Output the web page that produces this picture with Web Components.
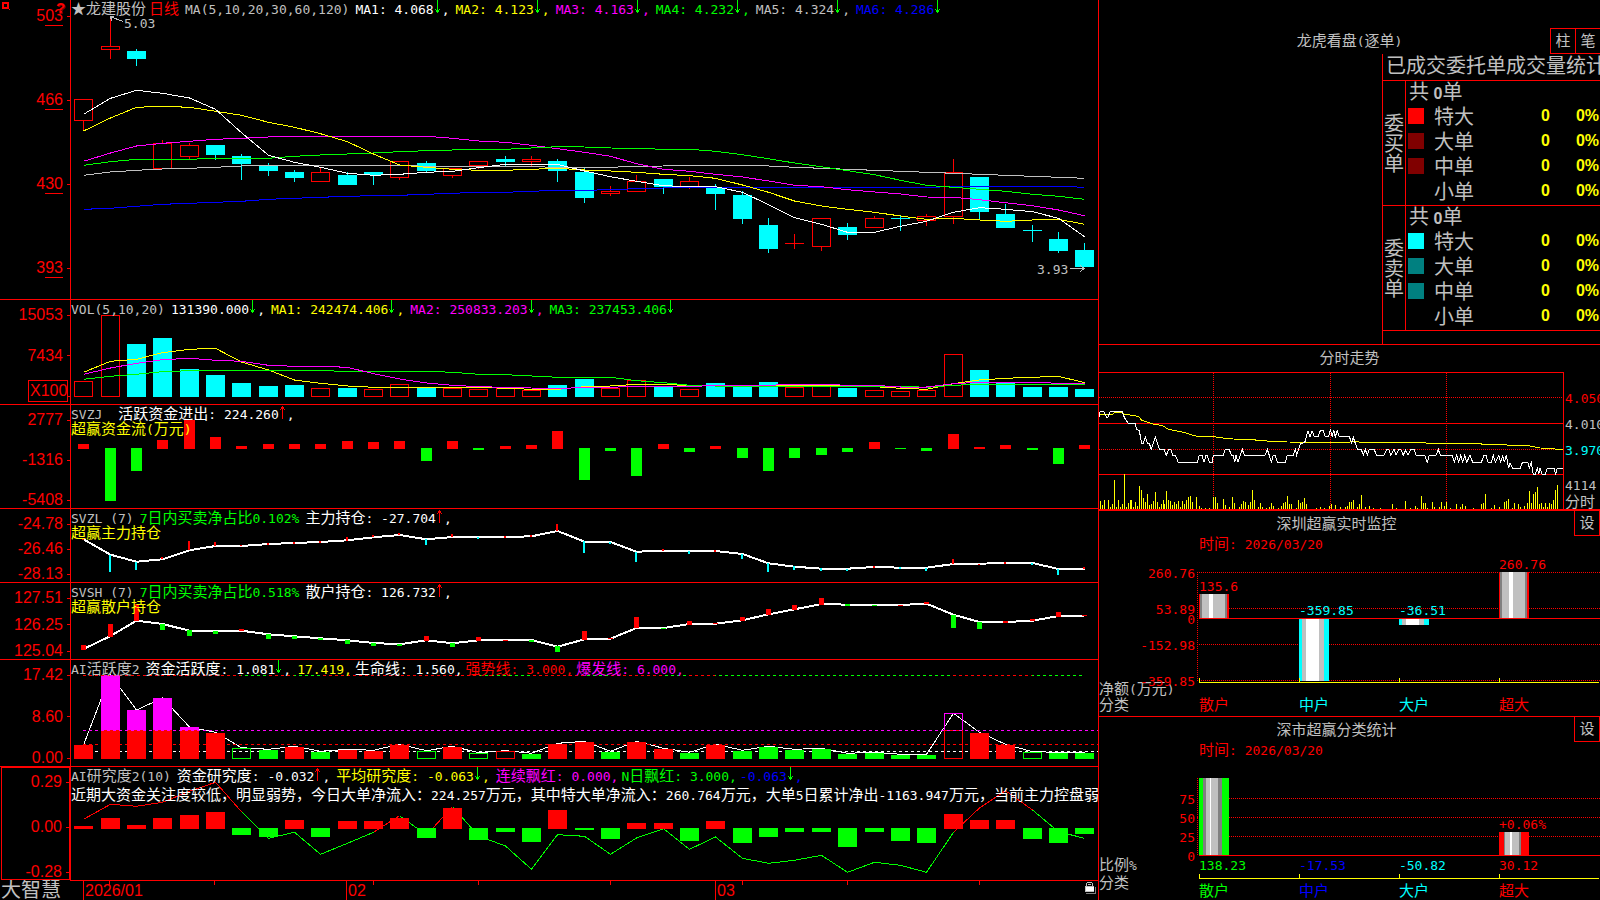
<!DOCTYPE html>
<html lang="zh-CN">
<head>
<meta charset="utf-8">
<title>大智慧 - 龙建股份 日线</title>
<style>
html,body{margin:0;height:100%;background:#000}
</style>
</head>
<body>
<quote-terminal></quote-terminal>
<script>
const RED='#f00',CY='#0ff',GR='#0f0',MG='#f0f',YE='#ff0',WH='#fff',GY='#c0c0c0',BL='#00f';
const COL={R:RED,C:CY,G:GR,M:MG};
const BASE=`
  *{box-sizing:border-box}
  :host{display:block;min-width:0;min-height:0}
  .a{font-family:"DejaVu Sans Mono","Liberation Mono",monospace;font-size:13px;line-height:0}
  button{font:inherit;color:inherit;background:#000;border:1px solid #f00;padding:0;margin:0;cursor:pointer}
  svg{display:block}
`;
/* Latin runs use the half-width face, Han text the full-width one. */
const mix=s=>s.replace(/[\x20-\x7e]+/g,m=>`<span class="a">${m}</span>`);
const arrow=d=>{
  const c=d==='u'?RED:GR;
  const p=d==='u'?'M3 1h1v13h-1zM2 2h3v2h-3zM1 4h1v1h-1zM5 4h1v1h-1z':'M3 0h1v13h-1zM2 10h3v2h-3zM1 9h1v1h-1zM5 9h1v1h-1z';
  return `<svg class="arw" width="8" height="14" viewBox="0 0 8 14" shape-rendering="crispEdges" aria-hidden="true"><path fill="${c}" d="${p}"/></svg>`;
};
/* One legend entry: [colour, text, arrow direction or '', trailing text] */
const item=([c,t,d='',e=''])=>`<span class="it${!d&&t.endsWith(',')?' tight':''}" style="color:${c}">${mix(t)}${d?arrow(d):''}${mix(e)}</span>`;

const define=(name,html,extra)=>customElements.define(name,class extends HTMLElement{
  constructor(){super();this.attachShadow({mode:'open'});}
  connectedCallback(){this.shadowRoot.innerHTML=typeof html==='function'?html(this):html;if(extra)extra(this);}
});

/* ---------- drawing helpers: 39 sessions share one x scale ---------- */
const W=1027,cx=i=>Math.round(12.3+26.34*i);
const rect=(x,y,w,h,c)=>`<rect x="${x}" y="${y}" width="${w}" height="${Math.max(1,h)}" fill="${c}"/>`;
const box=(x,y,w,h,c)=>`<path fill="none" stroke="${c}" d="M${x+.5} ${y+.5}h${w-1}v${h-1}h${1-w}z"/>`;
const poly=(pts,c,w=1)=>`<polyline fill="none" stroke="${c}" stroke-width="${w}" points="${pts.map(p=>p[0]+','+(+p[1]).toFixed(1)).join(' ')}"/>`;
const svg=(w,h,b)=>`<svg width="100%" height="100%" viewBox="0 0 ${w} ${h}" preserveAspectRatio="none" shape-rendering="crispEdges" aria-hidden="true">${b}</svg>`;
const serie=(ys,f,c,w)=>poly(ys.map((y,i)=>[cx(i)+.5,f(y)]),c,w);
const nums=s=>s.trim().split(/[\s,]+/).map(Number);
const bars=s=>s.trim().split(/\s+/).map(t=>[t[0],...t.slice(1).split('-').map(Number)]);

/* daily candles */
function kline(){
  const f=y=>y/3;
  const d=`R298-361-298-393 R139-149-50-177 C153-177-147-198 R430-506-420-506 R436-469-429-478 C435-465-435-480 C468-492-462-540 C497-513-489-528 C516-534-510-546 R517-545-504-545 C525-555-516-555 C516-526-516-555 R485-532-485-540 C489-513-483-517 R506-527-506-534 R485-497-485-507 C477-486-468-497 R478-485-468-497 C483-513-477-546 C516-594-504-609 R574-580-558-588 R544-575-525-575 C537-561-537-582 R544-560-531-567 C564-582-552-630 C585-657-573-672 C675-747-654-759 R730-730-702-747 R655-739-655-753 C681-705-669-720 R655-683-648-683 C654-657-648-693 R649-661-642-678 R517-650-477-672 C531-636-531-657 C642-684-612-684 C690-692-675-726 C717-753-696-759 C750-801-729-801`;
  let o='';
  bars(d).forEach(([k,t,b,h,l],i)=>{
    const x=cx(i),c=COL[k],r=Math.round,fl=Math.floor;
    if(k==='C')o+=rect(x,r(f(h)),1,r(f(l))-r(f(h)),c)+rect(x-9,r(f(t)),19,r(f(b))-r(f(t)),c);
    else if(t===b)o+=rect(x,r(f(h)),1,r(f(l))-r(f(h)),c)+rect(x-9,fl(f(t)),19,1,c);
    else{if(h<t)o+=rect(x,r(f(h)),1,r(f(t))-r(f(h)),c);
      if(l>b)o+=rect(x,fl(f(b)),1,r(f(l))-fl(f(b)),c);
      o+=box(x-9,fl(f(t)),19,fl(f(b))-fl(f(t))+1,c);}
  });
  o+=serie(nums('628 625 619 613 610 607 604 598 595 592 589 587 586 583 580 577 577 574 571 571 569 566 564 562 562 562 562 562 562 562 562 562 562 560 559 559 559 559 562'),f,BL);
  o+=serie(nums('526 516 511 507 505 502 498 496 496 496 496 496 496 499 499 499 499 500 502 502 502 499 498 496 496 496 498 502 505 508 511 514 517 520 523 526 529 532 535'),f,GY);
  o+=serie(nums('484 459 438 430 424 418 415 411 409 409 409 409 409 409 415 423 427 436 446 457 469 491 508 514 523 531 543 556 560 569 576 582 591 592 599 608 617 630 647'),f,MG);
  o+=serie(nums('496 485 478 478 478 475 475 475 469 465 462 459 455 452 450 448 448 444 440 441 444 445 448 448 454 464 476 489 500 512 524 541 556 562 568 574 583 589 598'),f,GR);
  o+=serie(nums('393 354 322 319 322 334 346 367 382 401 425 462 495 502 508 511 511 508 505 510 513 517 523 527 535 555 577 603 618 628 637 648 658 655 660 664 660 658 673'),f,YE);
  o+=serie(nums('343 295 271 280 294 328 398 466 487 502 520 526 523 517 514 503 493 493 493 513 530 544 557 560 560 577 614 653 673 697 697 679 664 637 623 628 635 655 710'),f,WH);
  o+=`<path fill="none" stroke="${GY}" d="M39 16.5L52 21.5M39 16.5h4M39 16.5l2 4M999 268.5h14M1009 265l4 3.5l-4 3.5"/>`;
  return svg(W,299,o);
}
function volume(){
  const f=y=>y/3-5;let o='';
  bars('R259 R61 C147 C129 C222 C240 C264 C273 C270 R280 C279 R283 R268 C279 R280 R283 R280 R286 C270 C252 R280 R256 C276 R283 C264 C276 C261 R277 R270 C279 R286 R289 R286 R178 C225 C264 C276 C276 C282').forEach(([k,t],i)=>{
    const y=k==='R'?Math.floor(f(t)):Math.round(f(t));
    o+=(k==='R'?box:rect)(cx(i)-9,y,19,97-y,COL[k]);
  });
  o+=serie(nums('232 199 193 173 163 160 201 225 255 265 273 277 277 277 277 277 280 283 283 275 273 268 268 272 271 271 271 271 271 273 275 280 283 266 255 250 247 244 263'),f,YE);
  o+=serie(nums('253 244 238 230 227 227 227 227 227 227 229 229 229 229 232 238 239 243 247 247 247 257 263 271 273 273 273 274 274 274 274 274 277 271 268 268 268 268 268'),f,GR);
  o+=serie(nums('238 219 205 194 190 196 199 211 214 214 217 236 252 264 271 275 277 279 281 277 277 274 274 274 272 271 271 268 268 271 271 276 276 266 262 262 262 265 265'),f,MG);
  return svg(W,104,o);
}
function fund(){
  const f=y=>Math.round(y/3-110);let o='';
  bars('R447 G618 G528 R435 R375 R426 R453 R447 R447 R447 R438 R441 R438 G498 R438 G465 R453 R450 R408 G555 G468 G543 R447 G471 R453 G489 G528 G489 G480 G471 R441 G462 G468 R417 R456 R450 G465 G507 R450').forEach(([k,t],i)=>{
    o+=k==='R'?rect(cx(i)-5,f(t),11,44-f(t),RED):rect(cx(i)-5,43,11,f(t)-43,GR);
  });
  return svg(W,103,o);
}
const stick=(s,f,w,dx)=>bars(s).map(([k,a,b],i)=>rect(cx(i)+dx,Math.round(f(a)),w,Math.round(f(b))-Math.round(f(a)),COL[k])).join('');
function mainHold(){
  const f=y=>y/3-214;
  return svg(W,73,serie(nums('733 779 800 793 766 753 753 747 744 741 736 727 720 733 726 726 726 724 708 740 741 770 767 768 768 777 805 815 821 821 816 818 818 807 806 804 804 822 822'),f,WH,2)
   +stick('R730-735 C780-830 C800-825 R786-793 R738-766 R741-753 R750-754 R744-749 R741-746 R738-743 R726-737 R720-727 R714-721 C732-749 R717-727 C726-732 R723-728 R720-725 R687-708 C738-774 C741-747 C771-801 R762-768 C768-777 R765-771 C777-792 C804-831 C813-825 C820-828 C822-828 R813-818 C815-822 C819-828 R792-808 R807-810 R801-807 C804-810 C822-840 R816-822',f,2,-1));
}
function retailHold(){
  const f=y=>y/3-3;
  return svg(W,76,serie(nums('207 168 122 132 152 153 152 163 169 175 181 189 193 181 190 181 180 180 200 178 176 144 144 132 131 121 103 88 72 74 74 75 71 104 126 126 122 108 107'),f,WH,2)
   +stick('R195-210 R132-171 R72-123 G132-150 G150-168 G153-162 R147-153 G162-177 G168-177 G174-180 G180-192 G189-198 G192-198 R168-183 G189-201 R171-183 R180-183 G180-186 G198-216 R153-180 R174-177 R111-144 G144-147 R123-134 R129-132 R111-123 R87-104 R75-90 R54-74 G71-78 G75-78 R75-78 R66-73 G105-144 G126-147 R123-130 R117-123 R96-110 R105-108',f,5,-2));
}
function activity(){
  const f=y=>y/3-80,x0=cx(0),xe=cx(38);
  const dash=(a,b,y,c)=>`<path stroke="${c}" stroke-dasharray="3 3" stroke-dashoffset="${(a-x0)%6}" d="M${a} ${y+.5}H${b}"/>`;
  const d=bars('R495 M285 M390 M354 M441 R459 g505 G510 R501 G516 R510 R513 R495 g514 R501 g520 r514 G522 R492 R486 G516 R486 R507 G519 R495 G513 G501 G510 G507 G522 G519 G525 G525 m400 R459 R495 g517 G519 G519');
  let o=serie(d.map(([k,t],i)=>i>4&&i!==33?t-2:t),f,WH);
  o+=dash(x0,W,91,WH);
  d.forEach(([k,t],i)=>{
    const x=cx(i)-9,y=Math.round(f(t));
    if(k==='M')o+=rect(x,y,19,70-y,MG)+rect(x,70,19,29,RED);
    else if(k==='m')o+=box(x,53,19,18,MG)+box(x,70,19,29,RED);
    else if(k==='g'||k==='r')o+=box(x,y,19,99-y,k==='g'?GR:RED);
    else o+=rect(x,y,19,99-y,COL[k]);
  });
  o+=dash(x0,W,70,MG)+dash(x0,W,84,RED);
  [[0,6,RED],[6,7,GR],[7,8,RED],[8,9,GR],[9,15,RED],[15,17,GR],[17,19,RED],[19,20,GR],[20,22,RED],[22,23,GR],[23,24,RED],[24,33,GR],[33,36,RED],[36,38,GR]].forEach(([a,b,c])=>o+=dash(cx(a),cx(b),15,c));
  return svg(W,106,o);
}
function research(){
  const f=y=>y/3-187;
  const l=nums('718 673 679 667 634 607 695 775 757 823 790 757 707 765 680 768 798 868 764 769 823 774 746 808 771 835 850 841 826 877 847 856 877 757 684 632 690 755 775');
  const seg=(a,b,c)=>poly(l.slice(a,b+1).map((y,i)=>[cx(a+i)+.5,f(y)]),c);
  let o=seg(0,6,RED)+seg(6,11,GR)+seg(11,12,RED)+seg(12,13,GR)+seg(13,14,RED)+seg(14,33,GR)+seg(33,36,RED)+seg(36,38,GR);
  bars('R738 R714 R735 R714 R705 R696 G765 G771 R720 G771 R723 R723 R714 G774 R684 G780 G756 G786 R690 G750 G777 R729 R729 G783 R723 G789 G771 G756 G756 G801 G756 G783 G789 R702 R720 R720 G777 G789 G762').forEach(([k,t],i)=>{
    const y=Math.round(f(t));o+=k==='R'?rect(cx(i)-9,y,19,62-y,RED):rect(cx(i)-9,61,19,y-61,GR);
  });
  return svg(W,113,o);
}
const DRAW={kline,volume,fund,mainHold,retailHold,activity,research};

/* ---------- one indicator pane: value axis, legend, drawing ---------- */
const LEGEND={
  kline:`<span class="it tight" style="color:${GY}">${mix('★')}龙建股份</span><span class="it" style="color:${RED}">日线</span>`
    +[[GY,'MA(5,10,20,30,60,120)'],[WH,'MA1: 4.068','d',','],[YE,'MA2: 4.123','d',','],[MG,'MA3: 4.163','d',','],[GR,'MA4: 4.232','d',','],[GY,'MA5: 4.324','d',','],[BL,'MA6: 4.286','d']].map(item).join(''),
  volume:[[GY,'VOL(5,10,20)'],[WH,'131390.000','d',','],[YE,'MA1: 242474.406','d',','],[MG,'MA2: 250833.203','d',','],[GR,'MA3: 237453.406','d']].map(item).join(''),
  fund:[[GY,'SVZJ'],[WH,'活跃资金进出: 224.260','u',',']].map(item).join(''),
  mainHold:[[GY,'SVZL (7)'],[GR,'7日内买卖净占比0.102%'],[WH,'主力持仓: -27.704','u',',']].map(item).join(''),
  retailHold:[[GY,'SVSH (7)'],[GR,'7日内买卖净占比0.518%'],[WH,'散户持仓: 126.732','u',',']].map(item).join(''),
  activity:[[GY,'AI活跃度2'],[WH,'资金活跃度: 1.081','d',','],[YE,'17.419,'],[WH,'生命线: 1.560,'],[RED,'强势线: 3.000,'],[MG,'爆发线: 6.000,']].map(item).join(''),
  research:[[GY,'AI研究度2(10)'],[WH,'资金研究度: -0.032','u',','],[YE,'平均研究度: -0.063','d',','],[MG,'连续飘红: 0.000,'],[GR,'N日飘红: 3.000,'],[BL,'-0.063','d',',']].map(item).join('')
};
define('chart-pane',el=>`
<style>${BASE}
  :host{display:grid;grid-template-columns:71px minmax(0,1fr);border-top:1px solid #f00}
  :host([type=kline]){border-top:0}
  .axis{position:relative;display:flex;flex-direction:column;justify-content:space-between;padding:7px 0 0;border-right:1px solid #f00;
    color:#f00;font:16px/16px "Liberation Sans",sans-serif;min-height:0}
  :host([type=kline]) .axis{padding:8px 0 23px}
  :host([type=research]) .axis{border-right:2px solid #f00}
  :host([type=research]) .axis::before{content:"";position:absolute;inset:0 0 0 1px;border:1px solid #f00;border-right:0}
  .lb{display:flex;justify-content:flex-end;align-items:center;gap:4px;height:16px}
  .lb::after{content:"";width:3px;height:1px;background:#f00}
  u{text-decoration:none;border-bottom:1px solid #f00;padding-bottom:1px;line-height:16px}
  .unit{position:absolute;right:2px;bottom:2px;border:1px solid #f00;height:22px;line-height:20px;padding:0 1px;width:40px;text-align:center}
  .plot{display:grid;grid-template:minmax(0,1fr)/minmax(0,1fr);min-height:0}
  .draw,.over{grid-area:1/1;min-width:0;min-height:0}
  .over{position:relative;color:#fff;font:15px/15px "Noto Sans CJK SC",sans-serif;white-space:nowrap}
  .legend{display:flex;height:15px}
  .it{display:block;height:15px;margin-right:6px}
  .it.tight{margin-right:3px}
  :host([type=fund]) .it:first-child{margin-right:16px}
  .arw{display:inline-block;vertical-align:top}
  ::slotted(*){display:block}
</style>
<div class="axis">${(el.getAttribute('axis')||'').split(' ').map(v=>{
  if(v==='_')return '<span class="lb"></span>';
  return `<span class="lb">${el.getAttribute('type')==='kline'?`<span>${v[0]}<u>${v.slice(1)}</u></span>`:`<span>${v}</span>`}</span>`}).join('')}
  ${el.getAttribute('type')==='volume'?'<span class="unit">X100</span>':''}</div>
<div class="plot"><div class="draw">${DRAW[el.getAttribute('type')]()}</div>
<div class="over"><div class="legend">${LEGEND[el.getAttribute('type')]}</div><slot></slot></div></div>`);

define('sub-title',el=>`<style>${BASE}:host{color:#ff0;line-height:15px}</style>${mix(el.getAttribute('text'))}`);
define('news-line',el=>`<style>${BASE}:host{color:#fff;line-height:18px;padding-top:3px;overflow:hidden}</style>${mix(el.getAttribute('text'))}`);
define('price-mark',el=>`<style>${BASE}:host{position:absolute;color:#c0c0c0;line-height:16px;transform:translateY(-50%)}</style>${mix(el.getAttribute('text'))}`,
  el=>{const [x,y]=el.getAttribute('at').split(',');el.style.left=(x/1027*100)+'%';el.style.top=(y/299*100)+'%';});

define('time-axis',`
<style>${BASE}
  :host{display:grid;grid-template-columns:70px minmax(0,1fr);color:#f00;font:16px/19px "Liberation Sans",sans-serif}
  .brand{color:#c0c0c0;font:20px/18px "Noto Sans CJK SC",sans-serif;white-space:nowrap;padding-left:1px}
  .scale{position:relative;border-top:1px solid #f00}
  .m{position:absolute;top:0;bottom:0;border-left:1px solid #f00;padding-left:1px}
  .t{position:absolute;top:0;height:4px;width:1px;background:#f00}
  .lock{position:absolute;right:2px;top:1px}
</style>
<div class="brand">大智慧</div>
<div class="scale">
  ${[[13,'2026/01'],[276,'02'],[645,'03']].map(([x,t])=>`<span class="m" style="left:${x/10.28}%">${t}</span>`).join('')}
  ${[39,144,303,408,540,672,777,909].map(x=>`<span class="t" style="left:${x/10.28}%"></span>`).join('')}
  <svg class="lock" width="11" height="12" viewBox="0 0 11 12" shape-rendering="crispEdges" aria-hidden="true">
    <path fill="#c0c0c0" d="M2 0h5v1h-5zM1 1h1v3h-1zM7 1h1v3h-1zM3 2h3v1h-3z"/><path fill="#fff" d="M1 5h8v4h-8z"/><path fill="#c0c0c0" d="M0 4h9v1h-9zM0 4h1v6h-1zM0 9h9v1h-9z"/><path fill="#808080" d="M10 5h1v6h-1zM1 11h10v1h-10z"/>
  </svg>
</div>`);

/* ---------- order statistics ---------- */
define('order-group',el=>{
  const cs=el.getAttribute('colors').split(' ');
  return `
<style>${BASE}
  table{width:100%;height:125px;table-layout:fixed;border-collapse:separate;border-spacing:0;border-top:1px solid #f00;color:#c0c0c0;font:20px/20px "Noto Sans CJK SC",sans-serif}
  td,th{padding:0 0 3px;font-weight:normal;text-align:left;white-space:nowrap}
  tr{height:25px}
  tr:first-child{height:24px}
  .side{border-right:1px solid #f00;white-space:normal;word-break:break-all;text-align:center;line-height:20px;padding:0 1px 1px}
  b,.n{font:bold 16px/16px "Liberation Sans",sans-serif}
  .n{color:#ff0;text-align:right}
  .p{padding-right:1px}
  .tot{padding-left:3px}
  .sw{display:block;width:16px;height:16px;margin-left:2px}
</style>
<table aria-label="${el.getAttribute('name')}">
<colgroup><col style="width:23px"><col style="width:28px"><col><col style="width:49px"><col style="width:50px"></colgroup>
<tr><th class="side" rowspan="5" scope="rowgroup">${el.getAttribute('name')}</th><td class="tot" colspan="4">共 <b>0</b>单</td></tr>
${['特大','大单','中单','小单'].map((n,i)=>`<tr><td><span class="sw" style="background:${cs[i]}"></span></td><th scope="row">${n}</th><td class="n">0</td><td class="n p">0%</td></tr>`).join('')}
</table>`;});
define('order-board',`
<style>${BASE}
  :host{display:flex;flex-direction:column;padding-top:28px;color:#c0c0c0;font:15px/16px "Noto Sans CJK SC",sans-serif}
  header{display:grid;grid-template-columns:1fr auto 1fr;align-items:stretch;height:26px}
  h2{grid-column:2;margin:0;font:inherit;line-height:24px}
  .btns{grid-column:3;display:flex;justify-content:flex-end}
  .btns button{width:25px;border-right:0;padding-bottom:2px}
  .body{flex:1;align-self:flex-end;width:218px;border-left:1px solid #f00}
  h3{margin:0;padding-left:3px;font:20px/22px "Noto Sans CJK SC",sans-serif;height:26px;white-space:nowrap;overflow:hidden}
  .end{border-top:1px solid #f00}
</style>
<header><h2>${mix('龙虎看盘(逐单)')}</h2><div class="btns"><button type="button">柱</button><button type="button">笔</button></div></header>
<div class="body"><h3>已成交委托单成交量统计</h3>
<order-group name="委买单" colors="#f00 #800000 #800000 #000"></order-group>
<order-group name="委卖单" colors="#0ff #008080 #008080 #000"></order-group>
<div class="end"></div></div>`);

/* ---------- intraday trend ---------- */
function intraday(){
  const X=x=>+(x/3-9).toFixed(1),Y=y=>+(y/3-33).toFixed(1);
  const pairs=s=>s.trim().split(/\s+/).map(p=>{const [a,b]=p.split(',');return [X(+a),Y(+b)];});
  let o='';
  const dot=(d)=>`<path fill="none" stroke="#f00" stroke-dasharray="1 1" d="${d}"/>`;
  o+=dot('M0 24.5H464')+dot('M0 76.5H464')+dot('M114.5 0V136')+dot('M231.5 0V136')+dot('M347.5 0V136');
  o+=rect(0,50,464,1,RED)+rect(0,101,464,1,RED);
  o+='<path fill="#ff0" d="'+`31,484 37,495 43,480 55,480 61,501 67,492 73,420 79,501 85,480 91,501 97,492 103,402 109,501 115,489 121,480 124,480 130,501 136,486 142,498 148,438 154,450 160,474 166,486 172,462 178,495 184,492 190,484 196,456 202,486 208,501 214,492 220,480 223,492 229,453 235,480 241,484 247,495 253,486 259,492 265,484 271,501 277,484 283,492 289,480 295,471 301,468 307,486 319,471 328,498 334,504 346,504 358,504 370,471 376,471 382,489 400,477 406,495 418,501 427,471 433,489 448,501 454,492 460,484 466,486 475,495 481,486 487,450 493,480 505,501 511,489 517,501 529,504 538,501 544,489 550,498 565,504 574,498 580,489 586,486 592,468 598,492 604,492 619,504 625,480 631,489 637,486 643,474 649,492 679,504 691,501 703,504 717,498 724,492 736,495 751,501 766,501 772,498 778,486 784,486 790,480 802,501 808,492 814,465 826,501 838,498 850,504 870,504 907,492 920,504 946,483 961,504 976,498 982,504 994,468 1000,489 1006,489 1012,504 1027,486 1033,501 1048,501 1054,486 1063,498 1069,486 1081,504 1099,492 1111,501 1117,492 1126,498 1150,504 1174,492 1180,489 1186,462 1204,504 1213,495 1228,501 1243,486 1249,484 1255,477 1267,504 1273,489 1285,492 1291,501 1303,498 1312,489 1318,453 1324,489 1330,462 1336,456 1342,441 1348,492 1354,489 1360,501 1366,489 1372,501 1378,489 1384,492 1390,480 1396,450 1402,435`.split(' ').map(p=>{const [a,b]=p.split(',');const x=Math.floor(a/3)-9,y=Math.round(b/3)-33;return `M${x} ${y}h1V136h-1z`}).join('')+'"/>';
  o+=poly(pairs('27,232 30,223 68,223 72,219 97,217 100,222 118,223 122,226 145,229 155,241 190,252 218,257 235,268 280,277 320,289 370,290 400,294 430,297 486,299 530,303 590,306 775,307 790,304 815,307 1000,307 1010,310 1172,310 1175,313 1250,314 1256,317 1316,317 1350,324 1392,325 1397,328 1420,328'),YE);
  o+=poly(pairs('27,230 30,215 42,215 50,232 54,232 60,215 97,215 103,232 115,250 135,250 140,268 148,272 155,310 160,310 166,290 172,310 178,310 184,328 196,290 208,328 222,328 229,346 236,328 244,330 248,346 256,346 265,367 322,367 328,346 336,346 342,367 348,346 352,346 358,367 367,367 370,346 400,346 406,328 418,328 424,346 430,346 434,367 438,346 444,367 457,328 463,346 525,346 532,328 538,346 544,367 550,346 556,346 562,367 586,367 592,346 610,346 616,328 620,346 632,310 644,308 654,272 660,290 666,272 673,290 684,290 691,272 700,272 706,290 716,290 721,270 727,290 731,270 736,290 742,272 748,290 778,290 785,308 790,292 802,328 814,328 820,346 826,328 832,346 838,328 852,328 860,346 882,346 890,328 896,328 902,346 912,328 918,346 926,328 932,328 940,346 946,330 954,346 962,328 972,328 978,346 1004,346 1012,367 1018,346 1038,346 1045,328 1051,346 1087,346 1093,367 1100,346 1106,367 1112,346 1118,367 1124,346 1130,367 1140,346 1148,367 1174,367 1182,346 1188,346 1194,367 1204,367 1210,346 1216,367 1226,346 1232,367 1238,346 1243,367 1249,346 1256,385 1260,368 1268,385 1291,385 1297,368 1314,368 1318,385 1324,368 1330,403 1336,403 1342,385 1346,403 1350,385 1356,403 1366,403 1372,385 1392,385 1397,403 1402,385 1420,385'),WH);
  return svg(464,136,o);
}
define('intraday-chart',`
<style>${BASE}
  :host{display:grid;grid-template:27px minmax(0,1fr)/minmax(0,1fr) 36px;border-top:1px solid #f00;color:#c0c0c0;font:15px/17px "Noto Sans CJK SC",sans-serif}
  h2{grid-column:1/3;margin:0;font:inherit;line-height:23px;text-align:center}
  .plot{border:solid #f00;border-width:1px 1px 0 0;min-height:0}
  .ax{display:flex;flex-direction:column;padding:12px 0 0 1px;overflow:hidden;white-space:nowrap}
  .ax>span{display:block;height:26px;line-height:26px}
  .ax>.s{height:17px;line-height:17px}
  .ax>.push{margin-top:auto}
</style>
<h2>分时走势</h2>
<div class="plot">${intraday()}</div>
<div class="ax"><span style="color:#f00">${mix('4.050')}</span><span>${mix('4.010')}</span><span style="color:#0ff">${mix('3.970')}</span><span class="s push">${mix('4114')}</span><span class="s">分时</span></div>`);

/* ---------- category bar charts ---------- */
const tube=(x,y,h,parts)=>{let o='';parts.forEach(([w,c])=>{o+=rect(x,y,w,h,c);x+=w;});return o;};
const DK='#808080';
const BOARDS={
  live:{title:'深圳超赢实时监控',unit:'净额(万元)',h:164,pad:4,lh:16,
    y:[['260.76',20],['53.89',56],['0',66],['-152.98',92],['-359.85',128]],
    vals:[[2,33,RED,'135.6'],[102,57,CY,'-359.85'],[202,57,CY,'-36.51'],[302,11,RED,'260.76']],
    cats:[['散户',RED],['中户',CY],['大户',CY],['超大',RED]],
    draw(){
      const lt=[[1,RED],[2,DK],[7,GY],[4,WH],[12,GY],[2,DK],[2,RED]],cy=[[3,CY],[4,GY],[13,WH],[5,GY],[5,CY]];
      let o='<path stroke="#f00" stroke-dasharray="1 1" d="M0 20.5H403M0 56.5H403M0 92.5H403M0 128.5H403M.5 20V130"/>'+rect(2,66,401,1,RED);
      o+=tube(2,42,24,lt)+tube(102,67,62,cy)+tube(202,67,6,cy)+tube(302,20,46,lt);
      o+='<path fill="#ff0" d="M2 130h400v1h-400zM2 126h1v4h-1zM102 126h1v4h-1zM202 126h1v4h-1zM302 126h1v4h-1z"/>';
      return svg(403,164,o);}},
  stat:{title:'深市超赢分类统计',unit:'比例%',h:142,pad:9,lh:18,
    y:[['75',40],['50',59],['25',78],['0',97]],
    vals:[[302,65,RED,'+0.06%'],[2,106,GR,'138.23'],[102,106,BL,'-17.53'],[202,106,CY,'-50.82'],[302,106,RED,'30.12']],
    cats:[['散户',GR],['中户',BL],['大户',CY],['超大',RED]],
    draw(){
      let o='<path stroke="#f00" stroke-dasharray="1 1" d="M0 40.5H403M0 59.5H403M0 78.5H403M.5 20V98"/>'+rect(2,97,401,1,RED);
      o+=tube(2,20,77,[[4,GR],[3,DK],[4,GY],[1,WH],[7,GY],[4,DK],[7,GR]])+tube(302,74,23,[[5,RED],[1,DK],[5,GY],[2,WH],[7,GY],[2,DK],[8,RED]]);
      o+='<path fill="#ff0" d="M2 120h400v1h-400zM2 116h1v4h-1zM102 116h1v4h-1zM202 116h1v4h-1zM302 116h1v4h-1z"/>';
      return svg(403,142,o);}}
};
define('flow-board',el=>{
  const b=BOARDS[el.getAttribute('type')];
  return `
<style>${BASE}
  :host{display:grid;grid-template-rows:25px 16px minmax(0,1fr);border-top:1px solid #f00;color:#c0c0c0;font:15px/16px "Noto Sans CJK SC",sans-serif}
  :host([type=live]){border-top-width:2px}
  header{display:grid;grid-template-columns:1fr 26px}
  h2{margin:0;font:inherit;line-height:23px;text-align:center}
  header button{border-top:0;padding-bottom:2px}
  .date{color:#f00;padding-left:100px;line-height:14px}
  .body{display:grid;grid-template-columns:98px minmax(0,1fr);min-height:0}
  .left{position:relative;display:flex;flex-direction:column;justify-content:flex-end;line-height:${b.lh}px;padding-bottom:${b.pad}px}
  .left i,.plot i{position:absolute;font-style:normal;line-height:16px;transform:translateY(-50%);white-space:nowrap}
  .left i{right:2px;color:#f00}
  .plot{position:relative;display:grid;grid-template:minmax(0,1fr)/minmax(0,1fr);min-height:0}
  .plot>*{grid-area:1/1;min-height:0}
  .cats{align-self:end;display:grid;grid-template-columns:repeat(4,100px);padding:0 0 ${b.h===164?4:2}px 2px}
</style>
<header><h2>${b.title}</h2><button type="button">设</button></header>
<time class="date" datetime="2026-03-20">${mix('时间: 2026/03/20')}</time>
<div class="body">
 <div class="left">${b.y.map(([t,y])=>`<i style="top:${(y/b.h*100).toFixed(2)}%">${mix(t)}</i>`).join('')}<span>${mix(b.unit)}</span><span>分类</span></div>
 <div class="plot">${b.draw()}${b.vals.map(([x,y,c,t])=>`<i style="left:${(x/4.03).toFixed(2)}%;top:${(y/b.h*100).toFixed(2)}%;color:${c}">${mix(t)}</i>`).join('')}
 <div class="cats">${b.cats.map(([t,c])=>`<span style="color:${c}">${t}</span>`).join('')}</div></div>
</div>`;});

/* ---------- page shell ---------- */
define('quote-terminal',`
<style>${BASE}
  :host{display:grid;grid-template-columns:minmax(0,1fr) 502px;height:100vh;min-height:760px;background:#000;color:#c0c0c0;overflow:hidden}
  main{position:relative;display:grid;grid-template-rows:299fr 105fr 104fr 74fr 77fr 107fr 114fr 20px;min-height:0;min-width:0}
  aside{display:grid;grid-template-rows:344px 165fr 207fr 184fr;border-left:1px solid #f00;min-height:0;min-width:0}
  .pin{position:absolute;left:2px;top:2px}
  .help{position:absolute;left:56px;top:0;font:bold 15px/16px "Liberation Sans",sans-serif;color:#f00;text-shadow:1px 1px #800000;background:none;border:0}
</style>
<main>
 <chart-pane type="kline" axis="503 466 430 393"><price-mark text="5.03" at="53,22"></price-mark><price-mark text="3.93" at="966,268"></price-mark></chart-pane>
 <chart-pane type="volume" axis="15053 7434 _"></chart-pane>
 <chart-pane type="fund" axis="2777 -1316 -5408"><sub-title text="超赢资金流(万元)"></sub-title></chart-pane>
 <chart-pane type="mainHold" axis="-24.78 -26.46 -28.13"><sub-title text="超赢主力持仓"></sub-title></chart-pane>
 <chart-pane type="retailHold" axis="127.51 126.25 125.04"><sub-title text="超赢散户持仓"></sub-title></chart-pane>
 <chart-pane type="activity" axis="17.42 8.60 0.00"></chart-pane>
 <chart-pane type="research" axis="0.29 0.00 -0.28"><news-line text="近期大资金关注度较低，明显弱势，今日大单净流入：224.257万元，其中特大单净流入：260.764万元，大单5日累计净出-1163.947万元，当前主力控盘弱"></news-line></chart-pane>
 <time-axis></time-axis>
 <svg class="pin" width="8" height="8" viewBox="0 0 8 8" shape-rendering="crispEdges" aria-hidden="true"><path fill="none" stroke="#f00" stroke-width="2" d="M1 1h5v5h-5z"/><path fill="#f00" d="M7 7h1v1h-1z"/></svg>
 <button class="help" type="button">?</button>
</main>
<aside>
 <order-board></order-board>
 <intraday-chart></intraday-chart>
 <flow-board type="live"></flow-board>
 <flow-board type="stat"></flow-board>
</aside>`);
</script>
</body>
</html>
